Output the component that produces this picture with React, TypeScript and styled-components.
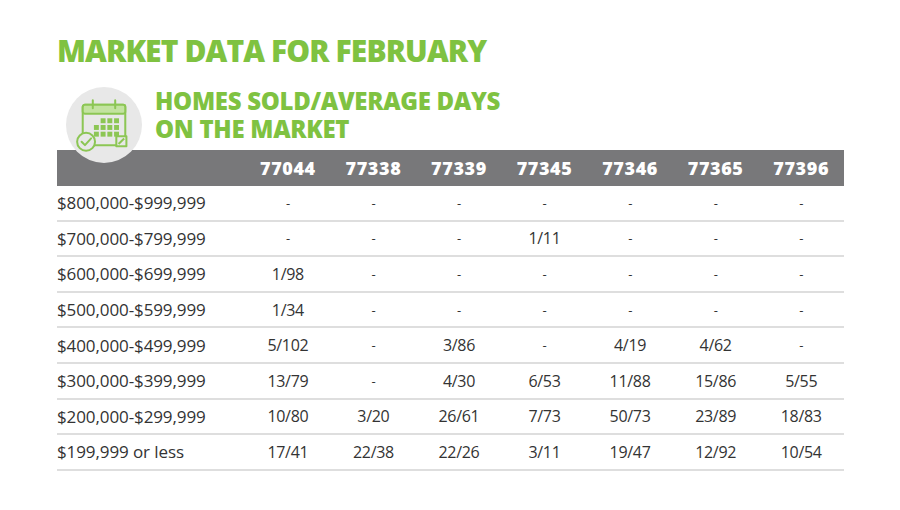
import React from 'react';
import styled, { createGlobalStyle } from 'styled-components';

const GlobalStyle = createGlobalStyle`
  html, body {
    margin: 0;
    padding: 0;
    background: #ffffff;
  }
  body {
    font-family: 'Open Sans', 'Liberation Sans', sans-serif;
    color: #333333;
  }
`;

const zips = ['77044', '77338', '77339', '77345', '77346', '77365', '77396'];

const rows: { label: string; values: string[] }[] = [
  { label: '$800,000-$999,999', values: ['-', '-', '-', '-', '-', '-', '-'] },
  { label: '$700,000-$799,999', values: ['-', '-', '-', '1/11', '-', '-', '-'] },
  { label: '$600,000-$699,999', values: ['1/98', '-', '-', '-', '-', '-', '-'] },
  { label: '$500,000-$599,999', values: ['1/34', '-', '-', '-', '-', '-', '-'] },
  { label: '$400,000-$499,999', values: ['5/102', '-', '3/86', '-', '4/19', '4/62', '-'] },
  { label: '$300,000-$399,999', values: ['13/79', '-', '4/30', '6/53', '11/88', '15/86', '5/55'] },
  { label: '$200,000-$299,999', values: ['10/80', '3/20', '26/61', '7/73', '50/73', '23/89', '18/83'] },
  { label: '$199,999 or less', values: ['17/41', '22/38', '22/26', '3/11', '19/47', '12/92', '10/54'] },
];

// calendar with a tick badge and a pencil corner, in light green outline
const CalendarIcon = () => (
  <svg width="56" height="54" viewBox="0 0 50 48" fill="none" stroke="#8cc654" strokeWidth="1.8" strokeLinejoin="round">
    <rect x="6" y="6" width="38" height="36" rx="2" />
    <rect x="6" y="6" width="38" height="8" rx="2" fill="#c3e3a0" />
    <path d="M15 2 v7 M35 2 v7" strokeLinecap="round" />
    <g fill="#8cc654" stroke="none">
      {[0, 1, 2].map((r) =>
        [0, 1, 2].map((c) => (
          <rect key={`${r}-${c}`} x={22 + c * 6} y={18 + r * 6} width="4.4" height="4.4" />
        ))
      )}
      <rect x="16" y="24" width="4.4" height="4.4" />
      <rect x="16" y="30" width="4.4" height="4.4" />
    </g>
    <circle cx="9" cy="39" r="8" fill="#e8e8e8" />
    <path d="M5 39 l3 3 l5.5 -6" strokeLinecap="round" />
    <rect x="36" y="34" width="9" height="9" fill="#e8e8e8" />
    <path d="M38 41 l5 -5" />
  </svg>
);

const MarketData = () => (
  <Page>
    <Title>MARKET DATA FOR FEBRUARY</Title>
    <Heading>
      <IconBadge>
        <CalendarIcon />
      </IconBadge>
      <Subtitle>
        HOMES SOLD/AVERAGE DAYS
        <br />
        ON THE MARKET
      </Subtitle>
    </Heading>
    <Table>
      <thead>
        <tr>
          <HeadCell />
          {zips.map((z) => (
            <HeadCell key={z}>{z}</HeadCell>
          ))}
        </tr>
      </thead>
      <tbody>
        {rows.map((row) => (
          <tr key={row.label}>
            <LabelCell>{row.label}</LabelCell>
            {row.values.map((v, i) => (
              <ValueCell key={i} $dash={v === '-'}>
                {v}
              </ValueCell>
            ))}
          </tr>
        ))}
      </tbody>
    </Table>
  </Page>
);

const Page = styled.div`
  width: 900px;
  height: 510px;
  box-sizing: border-box;
  padding: 33px 56px 0 57px;
  background: #ffffff;
`;

const Title = styled.h1`
  margin: 0;
  font-family: 'Open Sans', sans-serif;
  font-weight: 800;
  font-size: 30px;
  line-height: 36px;
  letter-spacing: -0.9px;
  color: #7fc241;
`;

const Heading = styled.div`
  display: flex;
  align-items: flex-start;
  margin-top: 18px;
  height: 63px;
`;

const IconBadge = styled.div`
  position: relative;
  z-index: 2;
  width: 76px;
  height: 76px;
  margin-left: 9px;
  border-radius: 50%;
  background: #e8e8e8;
  display: flex;
  align-items: center;
  justify-content: center;
  flex-shrink: 0;
`;

const Subtitle = styled.h2`
  margin: 0 0 0 13px;
  font-family: 'Open Sans', sans-serif;
  font-weight: 800;
  font-size: 24px;
  line-height: 28px;
  letter-spacing: -0.3px;
  color: #7fc241;
`;

const Table = styled.table`
  width: 787px;
  border-collapse: collapse;
  table-layout: fixed;
  font-family: 'Open Sans', sans-serif;
`;

const HeadCell = styled.th`
  height: 36px;
  padding: 0;
  background: #78787a;
  color: #ffffff;
  font-weight: 800;
  font-size: 18px;
  letter-spacing: 0.6px;
  text-align: center;
  width: 85.5px;
  &:first-child {
    width: 188px;
  }
`;

const LabelCell = styled.td`
  height: 33.6px;
  padding: 0;
  font-size: 17px;
  letter-spacing: -0.1px;
  color: #333333;
  border-bottom: 2px solid #dedede;
  text-align: left;
`;

const ValueCell = styled.td<{ $dash: boolean }>`
  height: 33.6px;
  padding: 0;
  font-size: ${(p) => (p.$dash ? '13px' : '16px')};
  letter-spacing: -0.3px;
  color: #333333;
  border-bottom: 2px solid #dedede;
  text-align: center;
`;

export default function App() {
  return (
    <>
      <GlobalStyle />
      <MarketData />
    </>
  );
}
